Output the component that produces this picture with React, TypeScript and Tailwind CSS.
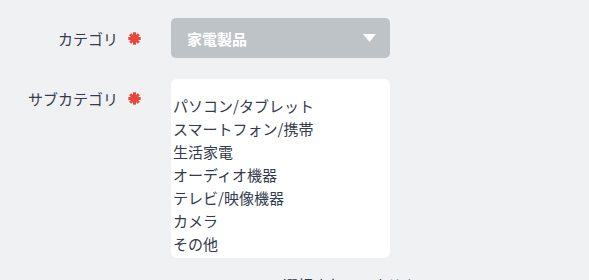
import React from "react";

const Star = () => (
  <svg width="13" height="13" viewBox="0 0 13 13" className="shrink-0">
    <g stroke="#e9473b" strokeWidth="3" strokeLinecap="butt">
      <line x1="6.5" y1="0.3" x2="6.5" y2="12.7" />
      <line x1="0.3" y1="6.5" x2="12.7" y2="6.5" />
      <line x1="2.2" y1="2.2" x2="10.8" y2="10.8" />
      <line x1="10.8" y1="2.2" x2="2.2" y2="10.8" />
    </g>
  </svg>
);

const items = [
  "パソコン/タブレット",
  "スマートフォン/携帯",
  "生活家電",
  "オーディオ機器",
  "テレビ/映像機器",
  "カメラ",
  "その他",
];

export default function App() {
  return (
    <div
      className="w-[589px] h-[280px] overflow-hidden bg-[#f0f1f3] text-[#333b4c]"
      style={{ fontFamily: '"Noto Sans CJK JP", "Noto Sans", sans-serif' }}
    >
      <div className="pt-[18px] flex flex-col">
        <div className="flex items-center">
          <div className="w-[141px] flex items-center justify-end">
            <span className="text-[15px] leading-none">カテゴリ</span>
            <span className="ml-[10px]">
              <Star />
            </span>
          </div>
          <div className="ml-[30px] w-[219px] h-[40px] rounded-[5px] bg-[#bec3c7] flex items-center justify-between pl-[16px] pr-[14px]">
            <span className="text-white font-bold text-[15px] leading-none">家電製品</span>
            <svg width="13" height="8" viewBox="0 0 13 8">
              <polygon points="0,0 13,0 6.5,8" fill="#ffffff" />
            </svg>
          </div>
        </div>
        <div className="flex items-start mt-[21px]">
          <div className="w-[141px] flex items-center justify-end pt-[12px]">
            <span className="text-[15px] leading-none">サブカテゴリ</span>
            <span className="ml-[10px]">
              <Star />
            </span>
          </div>
          <div className="ml-[30px] w-[219px] h-[179px] rounded-[6px] bg-white pt-[15px] pl-[2px]">
            {items.map((t) => (
              <div key={t} className="text-[15px] leading-[23px] whitespace-nowrap">
                {t}
              </div>
            ))}
          </div>
        </div>
        <div className="mt-[19px] pl-[283px] text-[15px] leading-none text-[#333b4c] whitespace-nowrap">
          選択されていません
        </div>
      </div>
    </div>
  );
}
